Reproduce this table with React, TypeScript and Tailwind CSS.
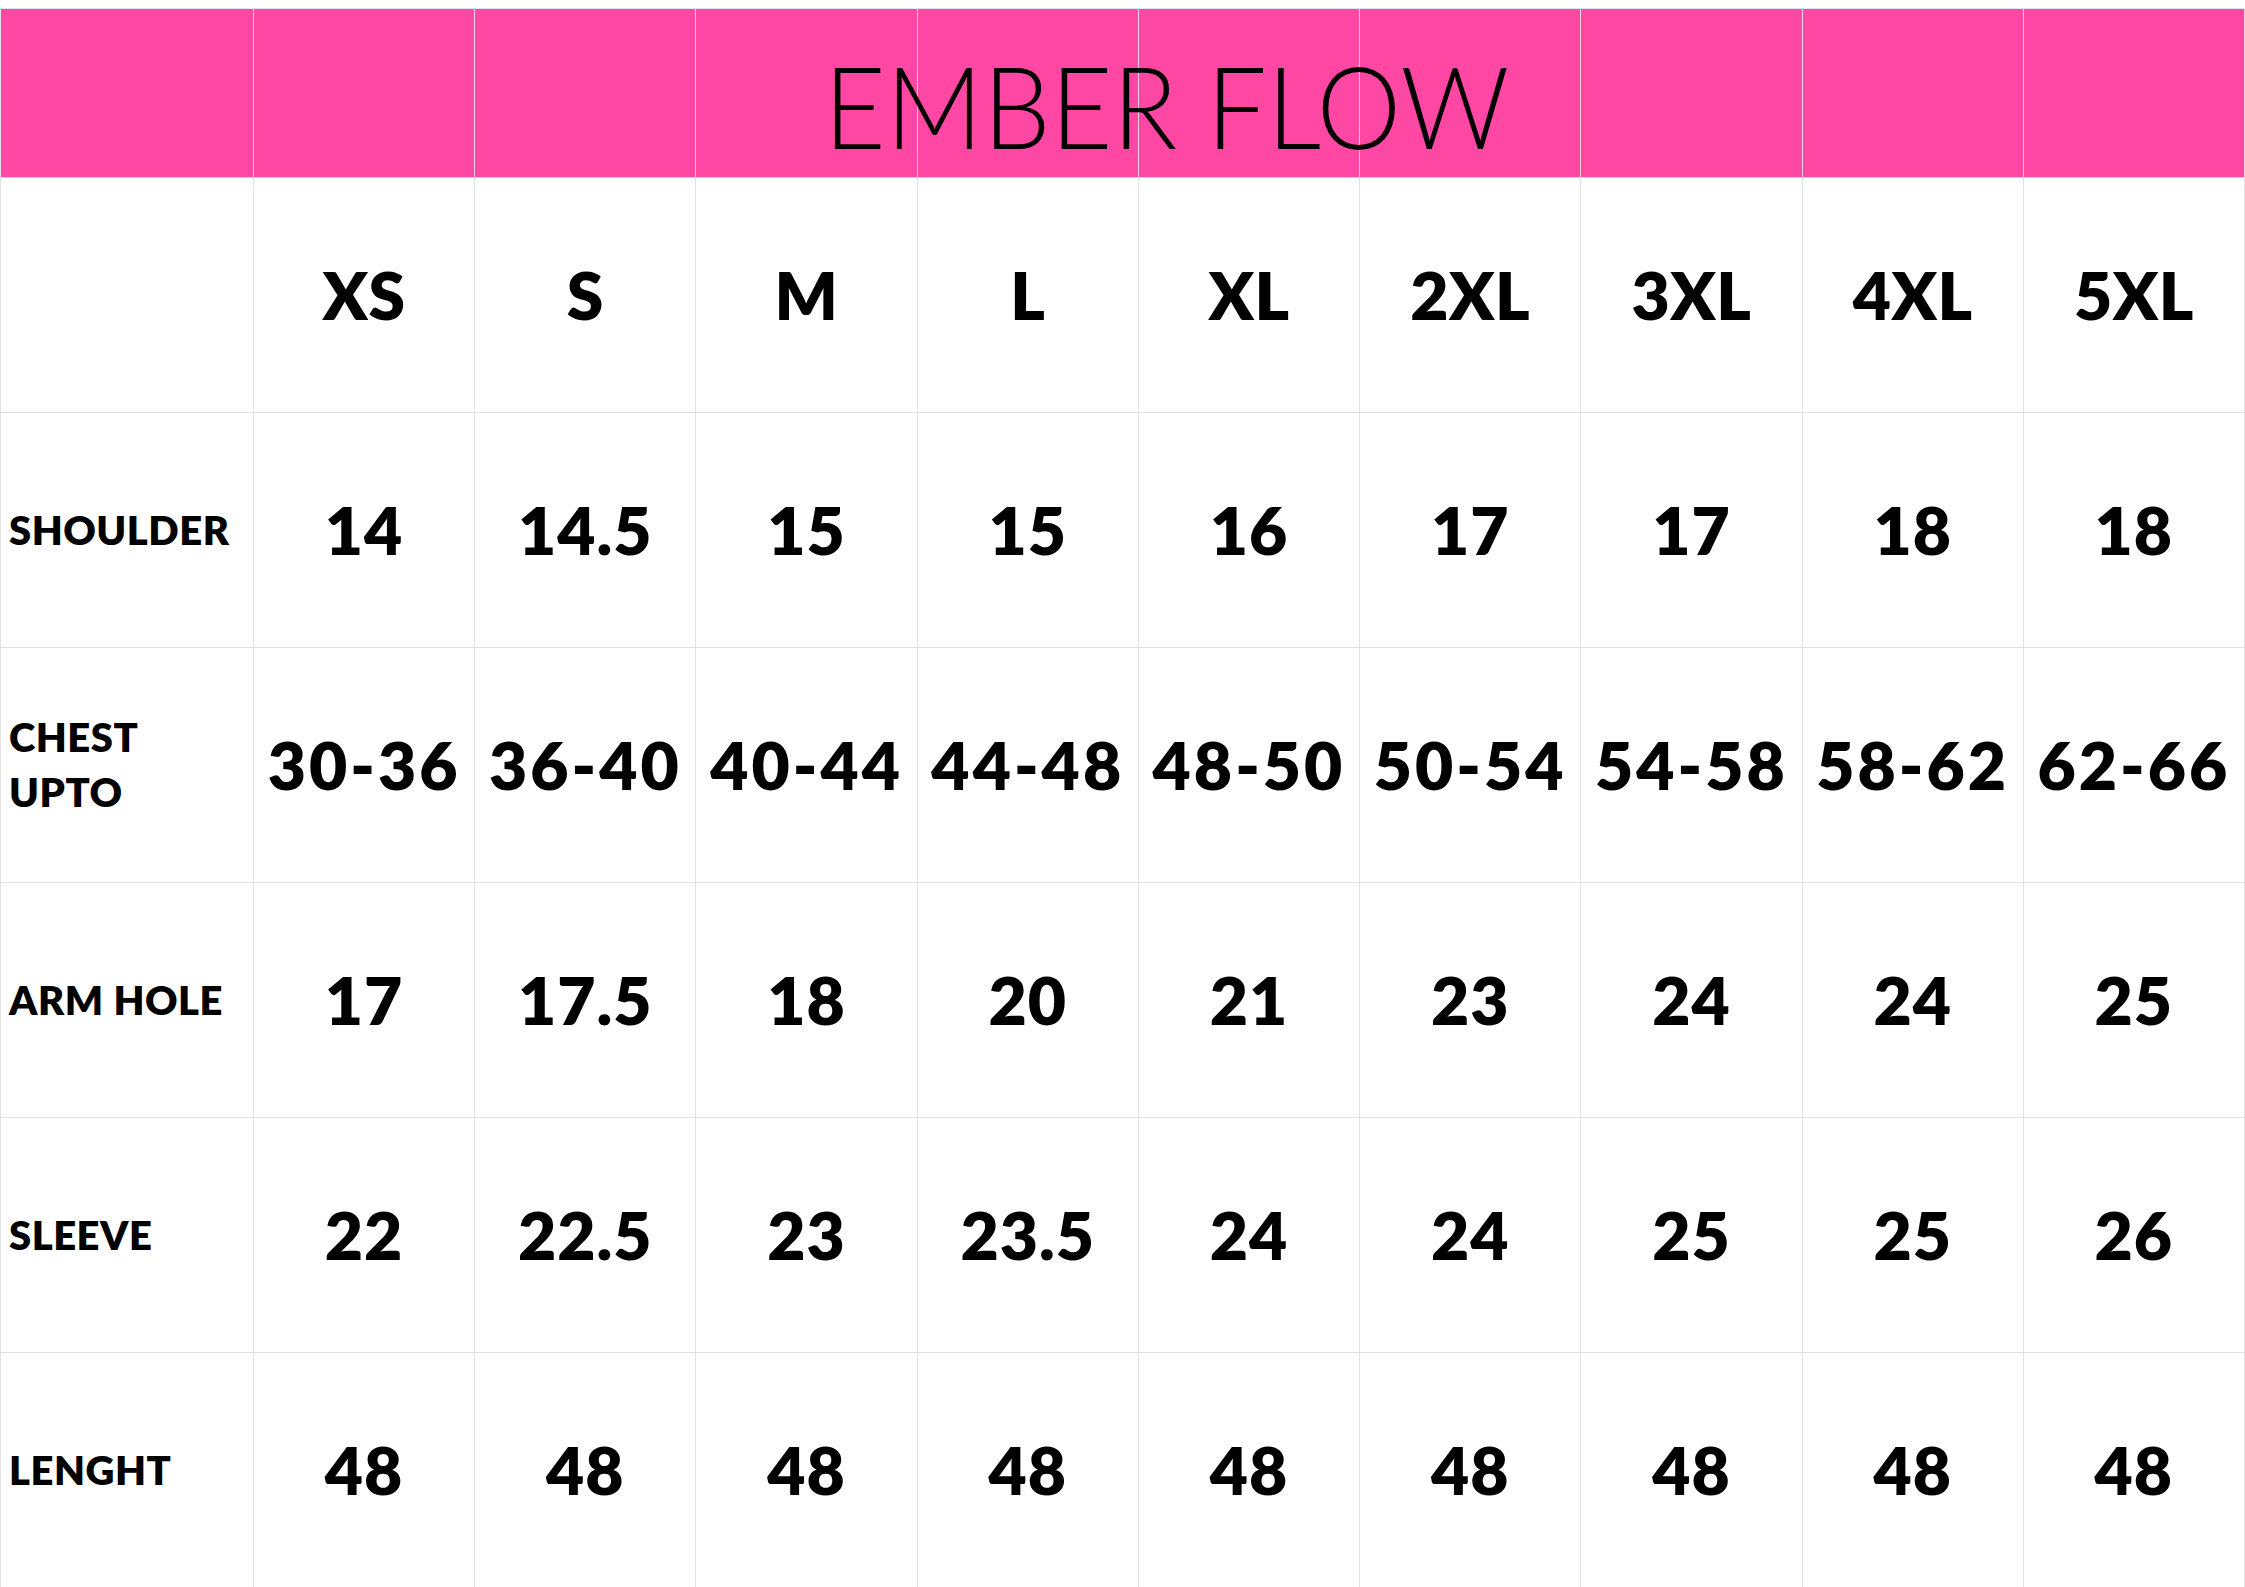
import React from "react";

const sizes = ["XS", "S", "M", "L", "XL", "2XL", "3XL", "4XL", "5XL"];

const rows: { label: string[]; values: string[]; wide?: boolean }[] = [
  { label: ["SHOULDER"], values: ["14", "14.5", "15", "15", "16", "17", "17", "18", "18"] },
  {
    label: ["CHEST", "UPTO"],
    values: ["30-36", "36-40", "40-44", "44-48", "48-50", "50-54", "54-58", "58-62", "62-66"],
    wide: true,
  },
  { label: ["ARM HOLE"], values: ["17", "17.5", "18", "20", "21", "23", "24", "24", "25"] },
  { label: ["SLEEVE"], values: ["22", "22.5", "23", "23.5", "24", "24", "25", "25", "26"] },
  { label: ["LENGHT"], values: ["48", "48", "48", "48", "48", "48", "48", "48", "48"] },
];

const cell = "flex items-center justify-center border-r border-b border-[#e2e2e2]";

const App = () => {
  return (
    <div className="h-[1587px] w-[2245px] overflow-hidden bg-white pt-[8px] font-['Lato',sans-serif] text-black">
      <div className="relative">
        <div className="grid grid-cols-[253px_repeat(9,minmax(0,1fr))] grid-rows-[169px_repeat(6,235px)] border-t border-l border-[#e2e2e2]">
          {/* pink title band */}
          {Array.from({ length: 10 }).map((_, i) => (
            <div key={"h" + i} className="border-r border-b border-[#e6cfdb] bg-[#ff47a3]" />
          ))}

          {/* size names */}
          <div className={cell} />
          {sizes.map((s) => (
            <div key={s} className={cell}>
              <span className="text-[66px] leading-none font-extrabold tracking-[0.5px]">{s}</span>
            </div>
          ))}

          {rows.map((r) => (
            <React.Fragment key={r.label.join(" ")}>
              <div className="flex flex-col justify-center border-r border-b border-[#e2e2e2] pl-[8px]">
                {r.label.map((l) => (
                  <span key={l} className="text-[40px] leading-[55px] font-extrabold tracking-[0.5px]">
                    {l}
                  </span>
                ))}
              </div>
              {r.values.map((v, i) => (
                <div key={i} className={cell}>
                  <span
                    className={
                      r.wide
                        ? "text-[66px] leading-none font-extrabold tracking-[3px] whitespace-nowrap"
                        : "text-[66px] leading-none font-extrabold tracking-[1px] whitespace-nowrap"
                    }
                  >
                    {v}
                  </span>
                </div>
              ))}
            </React.Fragment>
          ))}
        </div>

        {/* title overlays the header band */}
        <div className="absolute top-0 left-0 flex h-[170px] w-full items-center justify-center pt-[22px] pl-[88px]">
          <h1 className="scale-x-[0.93] font-['Lato',sans-serif] text-[115px] leading-none font-light">
            EMBER FLOW
          </h1>
        </div>
      </div>
    </div>
  );
};

export default App;
